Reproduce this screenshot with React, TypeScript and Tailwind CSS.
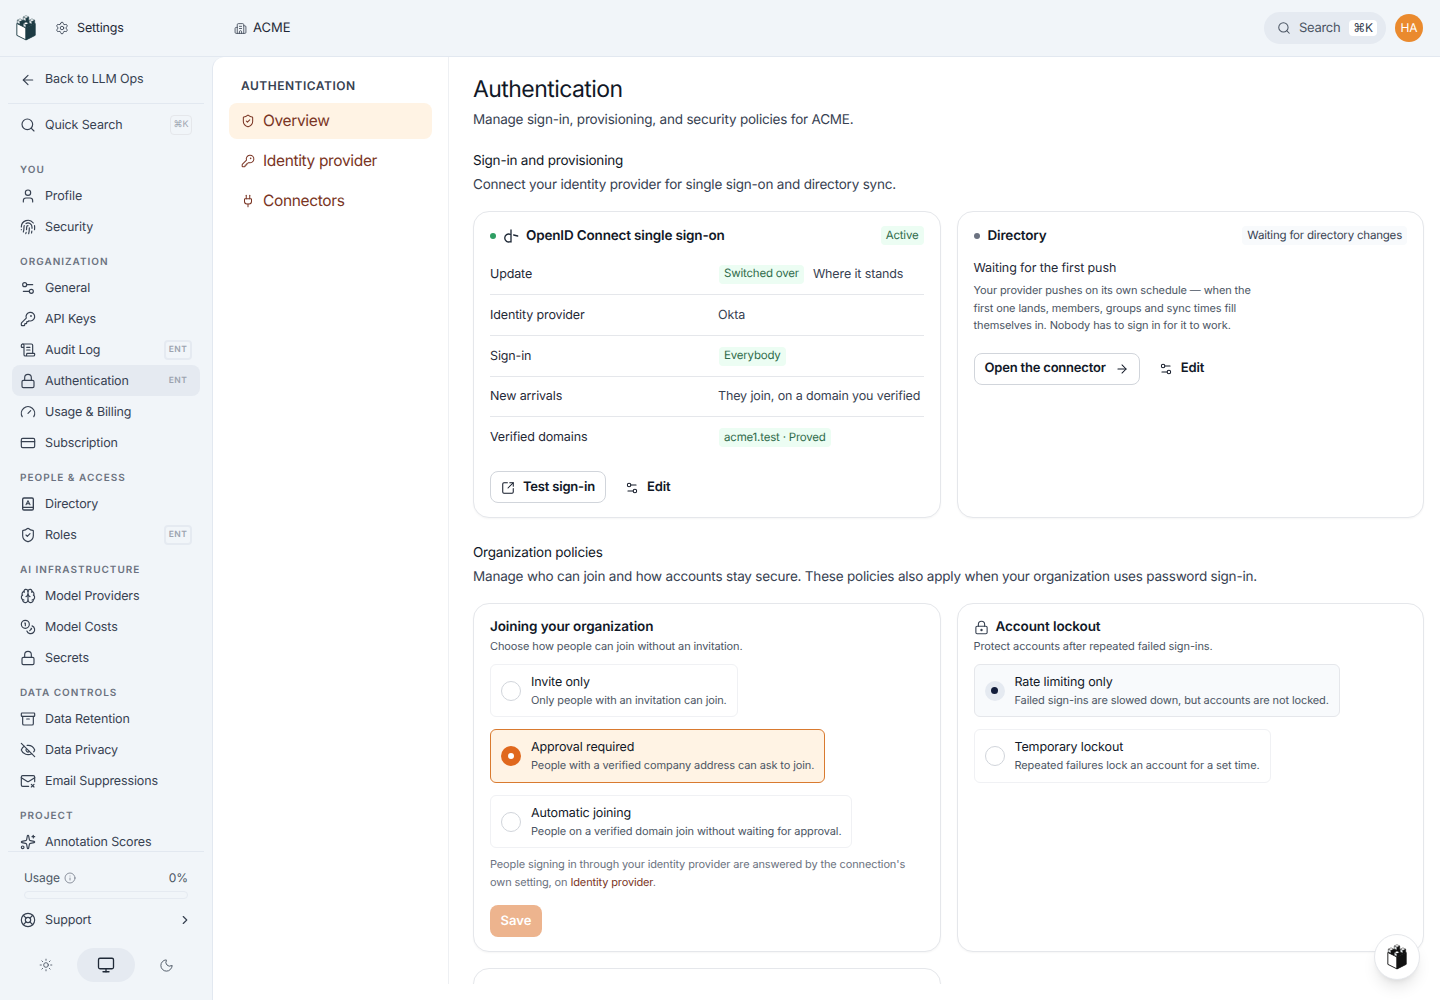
import type { ReactNode } from "react";
import {
  Archive,
  ArrowLeft,
  ArrowRight,
  Brain,
  Building2,
  ChevronRight,
  Coins,
  CreditCard,
  EyeOff,
  Fingerprint,
  Gauge,
  Info,
  KeyRound,
  LifeBuoy,
  Lock,
  LockKeyhole,
  MailX,
  Monitor,
  Moon,
  Plug,
  ScrollText,
  Search,
  Settings,
  Settings2,
  ShieldCheck,
  Sparkles,
  SquareArrowOutUpRight,
  Sun,
  User,
} from "lucide-react";

function DirectoryIcon({ className }: { className?: string }) {
  return (
    <svg viewBox="0 0 24 24" fill="none" stroke="currentColor" strokeWidth="2" strokeLinecap="round" strokeLinejoin="round" className={className}>
      <rect x="4" y="3" width="16" height="18" rx="2" />
      <path d="M4 17h16" />
      <path d="M9 13l3-6 3 6M10 11.5h4" strokeWidth="1.6" />
    </svg>
  );
}

function OidcIcon({ className }: { className?: string }) {
  return (
    <svg viewBox="0 0 24 24" fill="none" stroke="currentColor" strokeWidth="2" strokeLinecap="round" className={className}>
      <path d="M11 9.500a6 6 0 1 0 0 11" />
      <path d="M12 3v18" />
      <path d="M16 10.500l6 1.500" />
    </svg>
  );
}

// small isometric block of the tower's battlement
function Merlon({ x, y, dark }: { x: number; y: number; dark: string }) {
  return (
    <g stroke={dark} strokeWidth="0.5" strokeLinejoin="round">
      <path d={`M${x} ${y}l3 1.500-3 1.500-3-1.500z`} fill="#fff" />
      <path d={`M${x - 3} ${y + 1.5}l3 1.500v3l-3-1.500z`} fill="#e8edf0" />
      <path d={`M${x + 3} ${y + 1.5}l-3 1.500v3l3-1.500z`} fill={dark} />
    </g>
  );
}

function Logo({ className, dark }: { className?: string; dark: string }) {
  return (
    <svg viewBox="0 0 24 28" className={className}>
      <path d="M2 9l10 5v13L2 22z" fill="#fff" stroke={dark} strokeWidth="1" strokeLinejoin="round" />
      <path d="M12 14l10-5v13l-10 5z" fill={dark} stroke={dark} strokeWidth="1" strokeLinejoin="round" />
      <path d="M12 4l10 5-10 5L2 9z" fill={dark} />
      <Merlon x={12} y={0.5} dark={dark} />
      <Merlon x={5.5} y={4} dark={dark} />
      <Merlon x={18.5} y={4} dark={dark} />
      <Merlon x={12} y={7.5} dark={dark} />
    </svg>
  );
}

type NavItem = { label: string; icon: ReactNode; ent?: boolean; active?: boolean };

const icon = "w-4 h-4 shrink-0 text-[#374151]";
const sections: { title: string; items: NavItem[] }[] = [
  {
    title: "YOU",
    items: [
      { label: "Profile", icon: <User className={icon} strokeWidth={1.75} /> },
      { label: "Security", icon: <Fingerprint className={icon} strokeWidth={1.75} /> },
    ],
  },
  {
    title: "ORGANIZATION",
    items: [
      { label: "General", icon: <Settings2 className={icon} strokeWidth={1.75} /> },
      { label: "API Keys", icon: <KeyRound className={icon} strokeWidth={1.75} /> },
      { label: "Audit Log", icon: <ScrollText className={icon} strokeWidth={1.75} />, ent: true },
      { label: "Authentication", icon: <Lock className={icon} strokeWidth={1.75} />, ent: true, active: true },
      { label: "Usage & Billing", icon: <Gauge className={icon} strokeWidth={1.75} /> },
      { label: "Subscription", icon: <CreditCard className={icon} strokeWidth={1.75} /> },
    ],
  },
  {
    title: "PEOPLE & ACCESS",
    items: [
      { label: "Directory", icon: <DirectoryIcon className={icon} /> },
      { label: "Roles", icon: <ShieldCheck className={icon} strokeWidth={1.75} />, ent: true },
    ],
  },
  {
    title: "AI INFRASTRUCTURE",
    items: [
      { label: "Model Providers", icon: <Brain className={icon} strokeWidth={1.75} /> },
      { label: "Model Costs", icon: <Coins className={icon} strokeWidth={1.75} /> },
      { label: "Secrets", icon: <Lock className={icon} strokeWidth={1.75} /> },
    ],
  },
  {
    title: "DATA CONTROLS",
    items: [
      { label: "Data Retention", icon: <Archive className={icon} strokeWidth={1.75} /> },
      { label: "Data Privacy", icon: <EyeOff className={icon} strokeWidth={1.75} /> },
      { label: "Email Suppressions", icon: <MailX className={icon} strokeWidth={1.75} /> },
    ],
  },
  {
    title: "PROJECT",
    items: [{ label: "Annotation Scores", icon: <Sparkles className={icon} strokeWidth={1.75} /> }],
  },
];

function Sidebar() {
  return (
    <aside className="w-[212px] shrink-0 flex flex-col text-[12.500px] tracking-[-0.13px] text-[#374151] bg-[#f1f5f9]">
      <div className="mx-[8px] border-b border-[#e2e8f0] h-[47px] pb-[1px] flex items-center gap-[9px] px-[12px] shrink-0">
        <ArrowLeft className={icon} strokeWidth={1.75} />
        <span className="pt-[2px]">Back to LLM Ops</span>
      </div>
      <div className="h-[41px] mx-[12px] px-[8px] flex items-center gap-[9px] shrink-0">
        <Search className={icon} strokeWidth={1.75} />
        <span className="flex-1 pt-[4px]">Quick Search</span>
        <span className="w-[22px] h-[20px] flex items-center justify-center rounded border border-[#e5e7eb] text-[9px] text-[#9ca3af]">⌘K</span>
      </div>
      <nav className="flex-1 overflow-hidden mt-[5px]">
        {sections.map((s) => (
          <div key={s.title}>
            <div className="mt-[10px] h-[20px] px-[20px] flex items-center text-[10px] font-semibold tracking-[1px] text-[#6b7280]">{s.title}</div>
            {s.items.map((item) => (
              <div
                key={item.label}
                className={`h-[31px] mx-[12px] px-[8px] flex items-center gap-[9px] rounded-lg ${item.active ? "bg-[#e5eaf1]" : ""}`}
              >
                {item.icon}
                <span className="flex-1 pt-[4px]">{item.label}</span>
                {item.ent && (
                  <span className={`w-[28px] h-[20px] pt-[1px] flex items-center justify-center rounded text-[8.500px] font-semibold tracking-[0.4px] text-[#9ca3af] ${item.active ? "" : "border-2 border-[#e5eaf1]"}`}>
                    ENT
                  </span>
                )}
              </div>
            ))}
          </div>
        ))}
      </nav>
      <div className="mx-[8px] border-t border-[#e2e8f0] shrink-0 px-[16px] pt-[17px]">
        <div className="flex items-center justify-between h-[18px] text-[12px] tracking-[-0.1px] text-[#4b5563]">
          <span className="flex items-center gap-[4px]">
            Usage <Info className="w-3 h-3 text-[#6b7280]" strokeWidth={1.5} />
          </span>
          <span>0%</span>
        </div>
        <div className="h-[8px] rounded-full border border-[#e5eaf1] mt-[4px]" />
      </div>
      <div className="h-[31px] mt-[5px] mx-[12px] px-[8px] flex items-center gap-[9px] shrink-0">
        <LifeBuoy className={icon} strokeWidth={1.75} />
        <span className="flex-1 pt-[4px]">Support</span>
        <ChevronRight className="w-[14px] h-[14px] text-[#374151]" strokeWidth={2} />
      </div>
      <div className="h-[34px] mt-[13px] mb-[18px] flex items-center justify-center gap-[2px] shrink-0">
        <span className="w-[58px] flex justify-center"><Sun className="w-[14px] h-[14px] text-[#4b5563]" strokeWidth={1.5} /></span>
        <span className="w-[58px] h-[34px] rounded-full bg-[#e5eaf1] flex items-center justify-center"><Monitor className="w-[18px] h-[18px] text-[#1f2937]" strokeWidth={1.75} /></span>
        <span className="w-[58px] flex justify-center"><Moon className="w-[15px] h-[15px] text-[#4b5563]" strokeWidth={1.5} /></span>
      </div>
    </aside>
  );
}

function SubNav() {
  const links = [
    { label: "Overview", icon: <ShieldCheck className="w-[14px] h-[14px]" strokeWidth={1.75} />, active: true },
    { label: "Identity provider", icon: <KeyRound className="w-[14px] h-[14px]" strokeWidth={1.75} /> },
    { label: "Connectors", icon: <Plug className="w-[14px] h-[14px]" strokeWidth={1.75} /> },
  ];
  return (
    <div className="w-[236px] shrink-0 border-r border-[#eef0f3] px-[16px] pt-[20px]">
      <div className="h-[18px] px-[12px] flex items-center text-[12px] font-semibold tracking-[0.5px] text-[#374151]">AUTHENTICATION</div>
      <div className="mt-[8px] flex flex-col gap-[4px]">
        {links.map((l) => (
          <div key={l.label} className={`h-[36px] px-[12px] flex items-center gap-[8px] rounded-lg text-[15.500px] tracking-[-0.35px] text-[#7a3524] ${l.active ? "bg-[#fff3e4]" : ""}`}>
            {l.icon}
            <span>{l.label}</span>
          </div>
        ))}
      </div>
    </div>
  );
}

function Pill({ children, tone = "green" }: { children: ReactNode; tone?: "green" | "gray" }) {
  return (
    <span className={`inline-flex items-center h-[19px] px-[5px] rounded text-[11.500px] tracking-[-0.2px] whitespace-nowrap ${tone === "green" ? "bg-[#ecfdf3] text-[#2f6b4a]" : "bg-[#f8fafc] text-[#374151]"}`}>
      {children}
    </span>
  );
}

function Row({ label, children, last, short }: { label: string; children: ReactNode; last?: boolean; short?: boolean }) {
  return (
    <div className={`${short ? "h-[40px]" : "h-[41px]"} pt-[2px] grid grid-cols-[228px_1fr] items-center text-[12.500px] tracking-[-0.13px] ${last ? "" : "border-b border-[#e5e7eb]"}`}>
      <span className="text-[#1f2937]">{label}</span>
      <div className="flex items-center whitespace-nowrap">{children}</div>
    </div>
  );
}

function Outline({ children }: { children: ReactNode }) {
  return (
    <span className="h-[32px] px-[10px] pt-[1px] inline-flex items-center gap-[8px] rounded-lg border border-[#d1d5db] text-[13px] tracking-[-0.2px] font-semibold text-[#111827]">
      {children}
    </span>
  );
}

function EditLink() {
  return (
    <span className="inline-flex items-center gap-[8px] pt-[1px] text-[13px] tracking-[-0.1px] font-semibold text-[#111827]">
      <Settings2 className="w-[14px] h-[14px]" strokeWidth={1.75} />
      Edit
    </span>
  );
}

function Option({ title, desc, state, tall }: { title: string; desc: string; state?: "orange" | "dark"; tall?: boolean }) {
  const box =
    state === "orange"
      ? "border-[#d97a2f] bg-[#fff3e4]"
      : state === "dark"
        ? "border-[#e5e7eb] bg-[#f8fafc]"
        : "border-[#f0f1f4] bg-white";
  return (
    <div className={`self-start ${tall ? "h-[54px]" : "h-[53px]"} pl-[10px] pr-[10px] flex items-center gap-[10px] rounded-md border ${box}`}>
      {state === "orange" ? (
        <span className="w-[20px] h-[20px] rounded-full bg-[#e0681d] flex items-center justify-center"><span className="w-[6px] h-[6px] rounded-full bg-white" /></span>
      ) : state === "dark" ? (
        <span className="w-[20px] h-[20px] rounded-full bg-[#e5eaf1] flex items-center justify-center"><span className="w-[7px] h-[7px] rounded-full bg-[#111c3a]" /></span>
      ) : (
        <span className="w-[20px] h-[20px] rounded-full border border-[#d1d5db]" />
      )}
      <span className="flex flex-col">
        <span className="pt-[1px] text-[12.500px] leading-[18px] tracking-[-0.13px] text-[#111827]">{title}</span>
        <span className="text-[11px] leading-[17px] tracking-[-0.11px] text-[#4b5563] whitespace-nowrap">{desc}</span>
      </span>
    </div>
  );
}

const card = "rounded-2xl border border-[#e5e7eb] bg-white shadow-[0_1px_2px_rgba(0,0,0,0.04)]";
const heading = "text-[13.500px] leading-[20px] tracking-[-0.2px] text-[#111827]";
const lede = "mt-[4px] text-[13.500px] leading-[20px] tracking-[-0.2px] text-[#374151]";

function Content() {
  return (
    <div className="flex-1 min-w-0 overflow-hidden pl-[24px] pr-[16px] pt-[16px]">
      <h1 className="text-[23px] leading-[32px] font-normal tracking-[-0.57px] text-[#111827]">Authentication</h1>
      <p className="mt-[5px] text-[13.500px] leading-[20px] tracking-[-0.2px] text-[#374151]">Manage sign-in, provisioning, and security policies for ACME.</p>

      <h2 className={`mt-[21px] ${heading}`}>Sign-in and provisioning</h2>
      <p className={lede}>Connect your identity provider for single sign-on and directory sync.</p>

      <div className="mt-[16px] grid grid-cols-2 gap-[16px]">
        <div className={`${card} h-[307px] px-[16px] pt-[15px]`}>
          <div className="h-[17px] flex items-center">
            <span className="w-[6px] h-[6px] rounded-full bg-[#2e9e63]" />
            <OidcIcon className="w-[16px] h-[16px] ml-[7px] text-[#1f2937]" />
            <span className="ml-[7px] pt-[2px] text-[13.500px] tracking-[-0.17px] font-semibold text-[#111827] flex-1">OpenID Connect single sign-on</span>
            <Pill>Active</Pill>
          </div>
          <div className="mt-[10px]">
            <Row label="Update">
              <span className="ml-[1px] mb-[2px] flex"><Pill>Switched over</Pill></span>
              <span className="ml-[9px] text-[#374151]">Where it stands</span>
            </Row>
            <Row label="Identity provider"><span className="text-[#374151]">Okta</span></Row>
            <Row label="Sign-in"><span className="ml-[1px] mb-[2px] flex"><Pill>Everybody</Pill></span></Row>
            <Row label="New arrivals" short><span className="text-[#374151]">They join, on a domain you verified</span></Row>
            <Row label="Verified domains" last><span className="ml-[1px] mb-[2px] flex"><Pill>acme1.test · Proved</Pill></span></Row>
          </div>
          <div className="mt-[13px] flex items-center gap-[19px]">
            <Outline><SquareArrowOutUpRight className="w-[14px] h-[14px]" strokeWidth={1.75} />Test sign-in</Outline>
            <EditLink />
          </div>
        </div>

        <div className={`${card} h-[307px] px-[16px] pt-[15px]`}>
          <div className="h-[17px] flex items-center">
            <span className="w-[6px] h-[6px] rounded-full bg-[#6b7280]" />
            <span className="ml-[8px] pt-[2px] text-[13.500px] tracking-[-0.17px] font-semibold text-[#111827] flex-1">Directory</span>
            <Pill tone="gray">Waiting for directory changes</Pill>
          </div>
          <div className="mt-[16px] text-[12.500px] leading-[18px] tracking-[-0.1px] text-[#1f2937]">Waiting for the first push</div>
          <p className="mt-[4px] w-[290px] text-[11px] leading-[17.500px] tracking-[-0.11px] text-[#4b5563]">
            Your provider pushes on its own schedule — when the first one lands, members, groups and sync times fill themselves in. Nobody has to sign in for it to work.
          </p>
          <div className="mt-[18px] flex items-center gap-[19px]">
            <Outline>Open the connector<ArrowRight className="ml-[1px] w-[14px] h-[14px]" strokeWidth={1.75} /></Outline>
            <EditLink />
          </div>
        </div>
      </div>

      <h2 className={`mt-[25px] ${heading}`}>Organization policies</h2>
      <p className={lede}>Manage who can join and how accounts stay secure. These policies also apply when your organization uses password sign-in.</p>

      <div className="mt-[16px] grid grid-cols-2 gap-[16px]">
        <div className={`${card} h-[349px] px-[16px] pt-[15px]`}>
          <h3 className="h-[15px] pt-[2px] flex items-center text-[13.500px] tracking-[-0.1px] font-semibold text-[#111827]">Joining your organization</h3>
          <p className="mt-[4px] text-[11px] leading-[16px] tracking-[-0.11px] text-[#4b5563]">Choose how people can join without an invitation.</p>
          <div className="mt-[10px] flex flex-col gap-[12px]">
            <Option title="Invite only" desc="Only people with an invitation can join." />
            <Option title="Approval required" desc="People with a verified company address can ask to join." state="orange" tall />
            <Option title="Automatic joining" desc="People on a verified domain join without waiting for approval." />
          </div>
          <p className="mt-[7px] text-[11px] leading-[18px] tracking-[-0.13px] text-[#6b7280]">
            People signing in through your identity provider are answered by the connection's own setting, on <span className="text-[#7a3524]">Identity provider</span>.
          </p>
          <span className="mt-[14px] pt-[1px] w-[52px] h-[32px] rounded-lg bg-[#edb48e] text-white text-[13px] font-semibold flex items-center justify-center">Save</span>
        </div>
        <div className={`${card} h-[349px] px-[16px] pt-[15px]`}>
          <h3 className="h-[15px] pt-[2px] flex items-center gap-[7px] text-[13.500px] tracking-[-0.1px] font-semibold text-[#111827]">
            <LockKeyhole className="w-[15px] h-[15px] shrink-0 text-[#374151]" strokeWidth={1.75} />
            Account lockout
          </h3>
          <p className="mt-[4px] text-[11px] leading-[16px] tracking-[-0.11px] text-[#4b5563]">Protect accounts after repeated failed sign-ins.</p>
          <div className="mt-[10px] flex flex-col gap-[12px]">
            <Option title="Rate limiting only" desc="Failed sign-ins are slowed down, but accounts are not locked." state="dark" />
            <Option title="Temporary lockout" desc="Repeated failures lock an account for a set time." tall />
          </div>
        </div>
      </div>

      <div className={`${card} mt-[16px] h-[80px] w-[468px]`} />
    </div>
  );
}

export default function App() {
  return (
    <div className="relative h-[1000px] w-[1440px] overflow-hidden flex flex-col bg-[#f1f5f9] font-['Inter',sans-serif] antialiased [text-rendering:geometricPrecision]">
      <header className="h-[57px] shrink-0 border-b border-[#e2e8f0] flex items-center text-[13px] text-[#1f2937]">
        <div className="w-[212px] shrink-0 flex items-center pl-[15px]">
          <Logo className="w-[22px] h-[26px]" dark="#1d3b44" />
          <Settings className="ml-[18px] w-[14px] h-[14px] text-[#374151]" strokeWidth={1.5} />
          <span className="ml-[8px] pt-[2px] text-[12.500px] tracking-[-0.13px]">Settings</span>
        </div>
        <div className="ml-[22px] flex items-center gap-[6px]">
          <Building2 className="w-[13px] h-[13px] text-[#374151]" strokeWidth={1.5} />
          <span className="pt-[2px]">ACME</span>
        </div>
        <div className="ml-auto flex items-center gap-[9px] pr-[17px]">
          <div className="w-[122px] h-[32px] rounded-full bg-[#e5eaf1] flex items-center pl-[13px] gap-[8px] text-[#4b5563]">
            <Search className="w-[14px] h-[14px]" strokeWidth={1.75} />
            <span className="pt-[2px] tracking-[-0.3px]">Search</span>
            <span className="ml-[1px] h-[16px] px-[4px] rounded bg-white text-[12px] tracking-[-0.4px] text-[#374151] flex items-center">⌘K</span>
          </div>
          <div className="w-[28px] h-[28px] rounded-full bg-[#ea8a2e] text-white text-[12px] flex items-center justify-center">HA</div>
        </div>
      </header>
      <div className="flex-1 min-h-0 flex">
        <Sidebar />
        <main className="flex-1 min-w-0 bg-white rounded-tl-xl border-l border-[#e2e8f0] flex pb-[16px]">
          <SubNav />
          <Content />
        </main>
      </div>
      <div className="absolute left-[1374px] top-[934px] w-[46px] h-[46px] rounded-full bg-white border border-[#e5e7eb] shadow-lg flex items-center justify-center">
        <Logo className="w-[22px] h-[26px]" dark="#111111" />
      </div>
    </div>
  );
}
